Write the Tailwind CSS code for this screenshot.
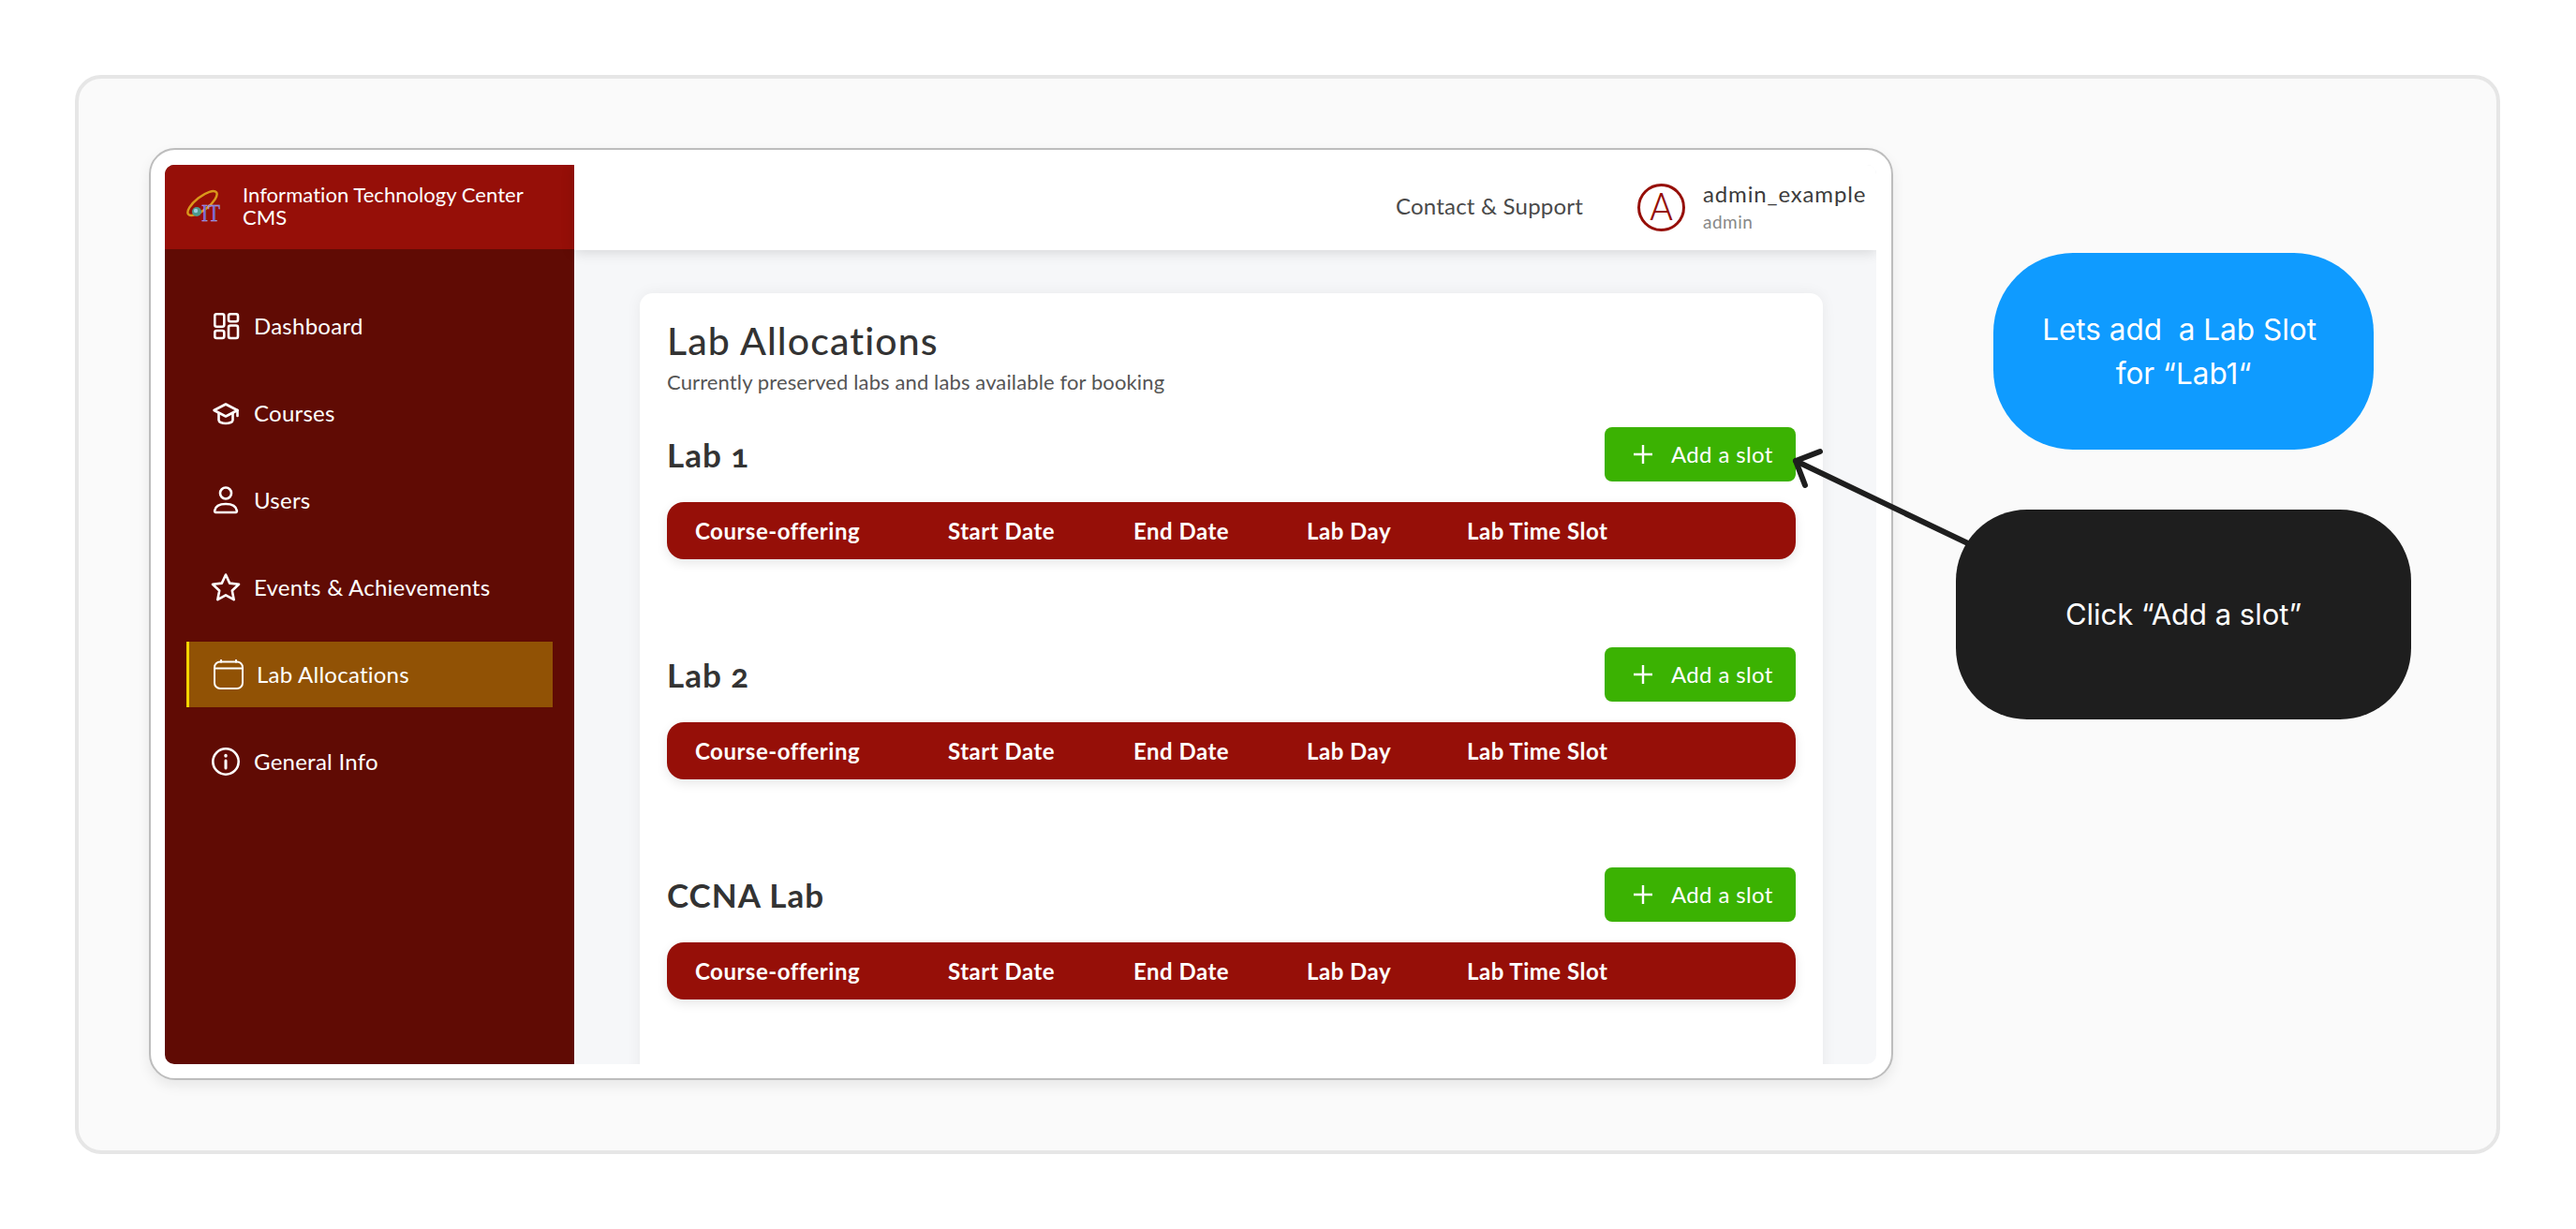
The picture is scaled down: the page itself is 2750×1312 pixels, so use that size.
<!DOCTYPE html>
<html lang="en">
<head>
  <meta charset="UTF-8" />
  <title>Lab Allocations</title>
  <script src="https://cdn.jsdelivr.net/npm/@tailwindcss/browser@4"></script>
</head>
<body class="relative w-[2750px] h-[1312px] overflow-hidden bg-white pt-[80px] pl-[80px] [font-family:Lato,sans-serif]">

  <!-- outer frame -->
  <div class="w-[2589px] h-[1152px] border-4 border-[#e6e6e6] rounded-[28px] bg-[#fafafa] pl-[75px] pt-[74px]">
    <!-- app window -->
    <div class="w-[1862px] h-[995px] border-2 border-[#bdbdbd] rounded-[28px] bg-white pl-[15px] pt-[16px] shadow-[0_6px_14px_rgba(0,0,0,0.08)]">
      <div class="flex w-[1827px] h-[960px] overflow-hidden rounded-[10px]">

        <!-- sidebar -->
        <aside class="w-[437px] shrink-0 bg-[#600b04] text-white">
          <div class="flex items-center h-[90px] bg-[#960f08] pl-[23px]">
            <svg class="w-[40px] h-[44px] shrink-0" viewBox="0 0 40 44">
              <ellipse cx="17" cy="18" rx="19" ry="7" transform="rotate(-38 17 18)" fill="none" stroke="#d9981c" stroke-width="2.500" />
              <circle cx="11" cy="27" r="5" fill="#4c9a8c" />
              <circle cx="10" cy="26" r="2.200" fill="#9ad0e0" />
              <text x="16" y="37" font-family="Liberation Serif" font-size="26" textLength="20" lengthAdjust="spacingAndGlyphs" fill="#6a62d8" stroke="#b9b4e8" stroke-width="0.4">IT</text>
            </svg>
            <div class="ml-[20px] mb-[2px] text-[22px] leading-[24px] tracking-[0.05px]">Information Technology Center<br />CMS</div>
          </div>

          <nav class="pt-[47px] pl-[23px] flex flex-col gap-[23px] text-[24px] tracking-[0.25px]">
            <a class="flex items-center h-[70px] w-[391px] border-l-[3px] border-transparent pl-[23px] gap-[14px]">
              <svg class="w-[32px] h-[32px]" viewBox="0 0 32 32" fill="none" stroke="white" stroke-width="2.600">
                <rect x="4.300" y="3.300" width="10" height="13.500" rx="2" />
                <rect x="19" y="3.300" width="10" height="8" rx="2" />
                <rect x="4.300" y="21" width="10" height="8" rx="2" />
                <rect x="19" y="15.500" width="10" height="13.500" rx="2" />
              </svg>
              <span>Dashboard</span>
            </a>
            <a class="flex items-center h-[70px] w-[391px] border-l-[3px] border-transparent pl-[23px] gap-[14px]">
              <svg class="w-[32px] h-[32px]" viewBox="0 0 32 32" fill="none" stroke="white" stroke-width="2.600" stroke-linejoin="round" stroke-linecap="round">
                <path d="M16 6.500 3.500 13 16 19.500 28.500 13Z" />
                <path d="M8.500 16v7.500c0 2 3.500 3.500 7.500 3.500s7.500-1.500 7.500-3.500V16" />
                <path d="M28.500 13v6" />
              </svg>
              <span>Courses</span>
            </a>
            <a class="flex items-center h-[70px] w-[391px] border-l-[3px] border-transparent pl-[23px] gap-[14px]">
              <svg class="w-[32px] h-[32px]" viewBox="0 0 32 32" fill="none" stroke="white" stroke-width="2.600" stroke-linejoin="round">
                <circle cx="16" cy="8.500" r="6" />
                <path d="M5.500 29h21c1.200 0 1.500-1 1.300-2-.8-4.500-5.300-7-11.800-7s-11 2.500-11.800 7c-.2 1 .1 2 1.300 2Z" />
              </svg>
              <span>Users</span>
            </a>
            <a class="flex items-center h-[70px] w-[391px] border-l-[3px] border-transparent pl-[23px] gap-[14px]">
              <svg class="w-[32px] h-[32px]" viewBox="0 0 32 32" fill="none" stroke="white" stroke-width="2.600" stroke-linejoin="round">
                <path d="M16 2.500 20.200 11.600 30 12.800 22.800 19.500 24.700 29.200 16 24.300 7.300 29.200 9.200 19.500 2 12.800 11.800 11.600Z" />
              </svg>
              <span>Events &amp; Achievements</span>
            </a>
            <a class="flex items-center h-[70px] w-[391px] border-l-[3px] border-[#f5d400] bg-[#915205] pl-[26px] gap-[14px]">
              <svg class="w-[32px] h-[32px]" viewBox="0 0 32 32" fill="none" stroke="white" stroke-width="2" stroke-linecap="round">
                <rect x="1" y="2.500" width="30" height="28.500" rx="6" />
                <path d="M1.500 9.500h29M8 .8v2M24 .8v2" />
              </svg>
              <span>Lab Allocations</span>
            </a>
            <a class="flex items-center h-[70px] w-[391px] border-l-[3px] border-transparent pl-[23px] gap-[14px]">
              <svg class="w-[32px] h-[32px]" viewBox="0 0 32 32" fill="none" stroke="white" stroke-width="2.600" stroke-linecap="round">
                <circle cx="16" cy="16" r="13.700" />
                <path d="M16 15v8" stroke-width="3" />
                <path d="M16 9.500v.5" stroke-width="3.400" />
              </svg>
              <span>General Info</span>
            </a>
          </nav>
        </aside>

        <!-- main column -->
        <div class="flex-1 flex flex-col min-w-0 bg-[#f6f7f9]">
          <header class="relative z-10 flex items-center justify-end shrink-0 h-[91px] bg-white pr-[11px] shadow-[0_2px_14px_rgba(0,0,0,0.14)]">
            <span class="text-[24px] text-[#4a4a4a] tracking-[0.2px] mr-[58px] mb-[3px]">Contact &amp; Support</span>
            <div class="flex items-center justify-center w-[51px] h-[51px] rounded-full border-[3px] border-[#960f08] text-[40px] leading-none text-[#960f08] [font-family:Roboto,sans-serif] font-light mr-[19px]">A</div>
            <div class="flex flex-col w-[174px] mt-[-3px]">
              <span class="text-[24px] leading-[30px] text-[#3c3c3c] tracking-[0.85px]">admin_example</span>
              <span class="text-[19px] leading-[24px] text-[#888888] tracking-[0.5px] mt-[3px]">admin</span>
            </div>
          </header>

          <div class="flex-1 min-h-0 pl-[70px] pr-[57px] pt-[46px] overflow-hidden">
            <section class="w-[1263px] h-[900px] bg-white rounded-t-[14px] pl-[29px] pr-[29px] pt-[28px] shadow-[0_0_16px_rgba(0,0,0,0.06)]">
              <h1 class="text-[41px] leading-[46px] font-medium text-[#333333] tracking-[1.1px]">Lab Allocations</h1>
              <p class="text-[22px] leading-[28px] text-[#555555] tracking-[0.12px] mt-[7px]">Currently preserved labs and labs available for booking</p>

              <div class="mt-[34px] flex flex-col gap-[94px]">
                <div>
                  <div class="flex items-center justify-between h-[58px]">
                    <h2 class="text-[35px] font-bold text-[#333333] tracking-[1px] oldstyle-nums">Lab 1</h2>
                    <button class="flex items-center justify-start pl-[31px] gap-[20px] w-[204px] h-[58px] rounded-[8px] bg-[#3bb202] text-white text-[24px] tracking-[0.35px]">
                      <svg class="w-[20px] h-[20px]" viewBox="0 0 20 20" stroke="white" stroke-width="2.400"><path d="M10 0v20M0 10h20" /></svg>
                      Add a slot
                    </button>
                  </div>
                  <div class="flex items-center h-[61px] mt-[22px] w-[1205px] rounded-[18px] bg-[#960f08] text-white text-[24px] font-bold tracking-[0.5px] pl-[30px] shadow-[0_4px_12px_rgba(0,0,0,0.1)]">
                    <span class="w-[270px]">Course-offering</span><span class="w-[198px]">Start Date</span><span class="w-[185px]">End Date</span><span class="w-[171px]">Lab Day</span><span>Lab Time Slot</span>
                  </div>
                </div>
                <div>
                  <div class="flex items-center justify-between h-[58px]">
                    <h2 class="text-[35px] font-bold text-[#333333] tracking-[1px] oldstyle-nums">Lab 2</h2>
                    <button class="flex items-center justify-start pl-[31px] gap-[20px] w-[204px] h-[58px] rounded-[8px] bg-[#3bb202] text-white text-[24px] tracking-[0.35px]">
                      <svg class="w-[20px] h-[20px]" viewBox="0 0 20 20" stroke="white" stroke-width="2.400"><path d="M10 0v20M0 10h20" /></svg>
                      Add a slot
                    </button>
                  </div>
                  <div class="flex items-center h-[61px] mt-[22px] w-[1205px] rounded-[18px] bg-[#960f08] text-white text-[24px] font-bold tracking-[0.5px] pl-[30px] shadow-[0_4px_12px_rgba(0,0,0,0.1)]">
                    <span class="w-[270px]">Course-offering</span><span class="w-[198px]">Start Date</span><span class="w-[185px]">End Date</span><span class="w-[171px]">Lab Day</span><span>Lab Time Slot</span>
                  </div>
                </div>
                <div>
                  <div class="flex items-center justify-between h-[58px]">
                    <h2 class="text-[35px] font-bold text-[#333333] tracking-[1px] oldstyle-nums">CCNA Lab</h2>
                    <button class="flex items-center justify-start pl-[31px] gap-[20px] w-[204px] h-[58px] rounded-[8px] bg-[#3bb202] text-white text-[24px] tracking-[0.35px]">
                      <svg class="w-[20px] h-[20px]" viewBox="0 0 20 20" stroke="white" stroke-width="2.400"><path d="M10 0v20M0 10h20" /></svg>
                      Add a slot
                    </button>
                  </div>
                  <div class="flex items-center h-[61px] mt-[22px] w-[1205px] rounded-[18px] bg-[#960f08] text-white text-[24px] font-bold tracking-[0.5px] pl-[30px] shadow-[0_4px_12px_rgba(0,0,0,0.1)]">
                    <span class="w-[270px]">Course-offering</span><span class="w-[198px]">Start Date</span><span class="w-[185px]">End Date</span><span class="w-[171px]">Lab Day</span><span>Lab Time Slot</span>
                  </div>
                </div>
              </div>
            </section>
          </div>
        </div>
      </div>
    </div>
  </div>

  <!-- annotations over the screenshot -->
  <svg class="absolute left-0 top-0 w-[2750px] h-[1312px] pointer-events-none" viewBox="0 0 2750 1312" fill="none" stroke="#1e1e1e" stroke-width="6" stroke-linecap="round" stroke-linejoin="round">
    <path d="M2105 582 1917 492" />
    <path d="M1943 482 1917 492 1927 518" />
  </svg>
  <div class="absolute left-[2128px] top-[270px] w-[406px] h-[210px] rounded-[85px] bg-[#0f9bff] text-white text-[31.500px] leading-[47px] [font-family:Inter,sans-serif] flex items-center justify-center text-center whitespace-pre">Lets add  a Lab Slot 
for “Lab1“</div>
  <div class="absolute left-[2088px] top-[544px] w-[486px] h-[224px] rounded-[76px] bg-[#1e1e1e] text-white text-[31px] [font-family:Inter,sans-serif] flex items-center justify-center">Click “Add a slot”</div>
</body>
</html>
